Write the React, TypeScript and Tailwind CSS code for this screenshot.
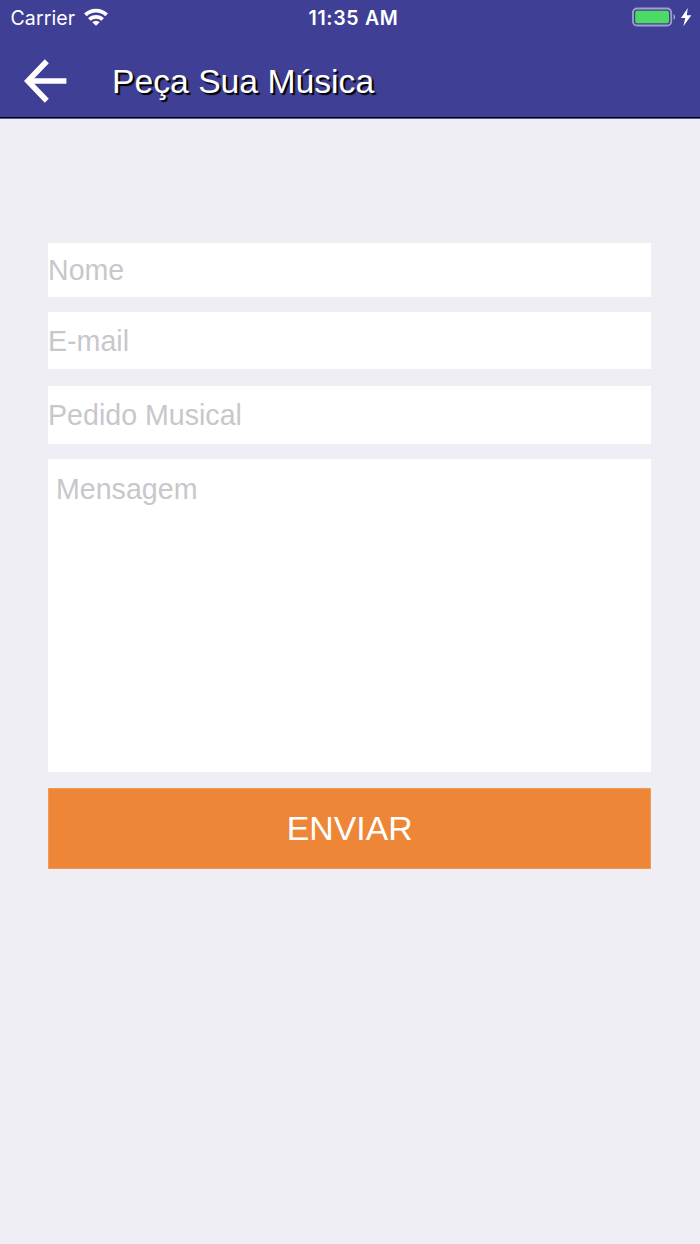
import { useState } from "react";

const inputClass =
  "block w-full bg-white p-0 text-[28.6px] text-black outline-none placeholder:text-[#c7c7cc] placeholder:opacity-100";

const StatusBar = () => {
  return (
    <div className="grid h-9 grid-cols-3 items-center font-['Inter',sans-serif] text-white">
      <div className="flex items-center pl-[10.5px]">
        <span className="text-[19.5px] leading-9 tracking-[0.1px]">Carrier</span>
        <svg width="24" height="18" viewBox="0 0 24 18" className="ml-[9px] -mt-[2px]">
          <g fill="none" stroke="white" strokeWidth="3.8">
            <path d="M1.4 6.9a15.2 15.2 0 0 1 21.2 0" />
            <path d="M5.4 11.5a9.5 9.5 0 0 1 13.2 0" />
          </g>
          <path d="M12 17.7l-3.7-3.5a5.2 5.2 0 0 1 7.4 0z" fill="white" />
        </svg>
      </div>
      <span className="pl-[7px] text-center text-[19.5px] font-semibold leading-9 tracking-[0.7px]">
        11:35 AM
      </span>
      <div className="flex items-center justify-end pr-[7px]">
        <svg width="61" height="20" viewBox="0 0 61 20" className="-mt-[2px]">
          <rect x="1" y="1.5" width="38.2" height="17" rx="4" fill="none" stroke="white" strokeOpacity="0.5" strokeWidth="1.8" />
          <rect x="3.2" y="3.8" width="33.8" height="12.4" rx="2" fill="#4cd964" />
          <path d="M41.5 7a3.5 3.5 0 0 1 0 6z" fill="white" fillOpacity="0.5" />
          <path d="M55.8 1L49 11h4.2l-1.8 8.3L59.3 8.3h-4.5z" fill="white" />
        </svg>
      </div>
    </div>
  );
};

const App = () => {
  const [name, setName] = useState("");
  const [email, setEmail] = useState("");
  const [song, setSong] = useState("");
  const [message, setMessage] = useState("");

  return (
    <div className="min-h-[1244px] w-full bg-[#efeef4] font-['Liberation_Sans',Arial,sans-serif]">
      <header className="h-[119px] border-b border-[#5a5ba6] bg-[#3f4095]">
        <div className="flex h-[118px] flex-col border-b border-black">
          <StatusBar />
          <div className="flex items-center pl-6 pt-[22px]">
            <button type="button" aria-label="Voltar" className="h-[46px] w-[43px]">
              <svg width="43" height="46" viewBox="0 0 43 46" fill="none" stroke="white" strokeWidth="5.6">
                <path d="M22.8 3.2L3.8 23l19 19.8M3.4 23h39" />
              </svg>
            </button>
            <h1 className="ml-[45px] whitespace-nowrap text-[33.7px] leading-[46px] text-white [text-shadow:2px_2px_1px_#000]">
              Peça Sua Música
            </h1>
          </div>
        </div>
      </header>

      <form
        onSubmit={(e) => e.preventDefault()}
        className="ml-[47.5px] flex w-[603.5px] flex-col pt-[124px]"
      >
        <input
          className={`${inputClass} h-[54px] pl-[0.5px]`}
          placeholder="Nome"
          value={name}
          onChange={(e) => setName(e.target.value)}
        />
        <input
          className={`${inputClass} mt-[15px] h-[57px] pl-[0.5px] pt-[2px]`}
          placeholder="E-mail"
          value={email}
          onChange={(e) => setEmail(e.target.value)}
        />
        <input
          className={`${inputClass} mt-[17px] h-[58px] pl-[0.5px]`}
          placeholder="Pedido Musical"
          value={song}
          onChange={(e) => setSong(e.target.value)}
        />
        <textarea
          className="mt-[15.3px] block h-[312.7px] w-full resize-none bg-white px-[8.5px] pt-[14px] text-[28.6px] leading-[33px] text-black outline-none placeholder:text-[#c7c7cc] placeholder:opacity-100"
          placeholder="Mensagem"
          value={message}
          onChange={(e) => setMessage(e.target.value)}
        />
        <button
          type="submit"
          className="mt-4 h-[81px] border border-[#ef9a5a] bg-[#ee8637] pl-px text-[33.8px] text-white"
        >
          ENVIAR
        </button>
      </form>
    </div>
  );
};

export default App;
